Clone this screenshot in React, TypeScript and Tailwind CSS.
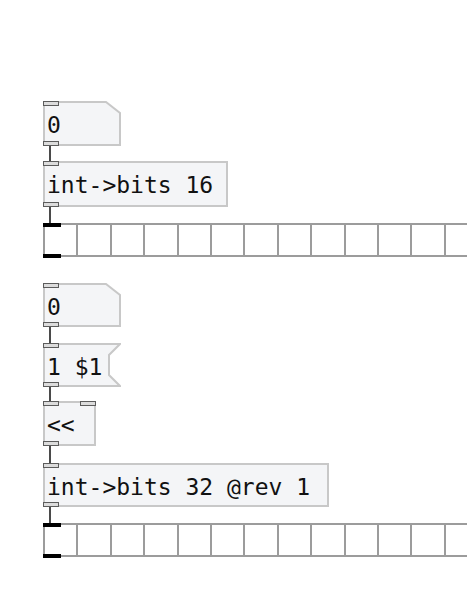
import React from 'react';

const mono = "font-['DejaVu_Sans_Mono','Liberation_Mono',monospace] text-[23px] leading-[23px] text-[#111] slashed-zero whitespace-pre";

type Shape = 'rect' | 'number' | 'message';

function outline(shape: Shape, w: number, h: number) {
  const r = w - 1;
  const b = h - 1;
  if (shape === 'number') return `1,1 ${w - 15},1 ${r},12 ${r},${b} 1,${b}`;
  if (shape === 'message') return `1,1 ${r},1 ${w - 12},12 ${w - 12},${h - 12} ${r},${b} 1,${b}`;
  return `1,1 ${r},1 ${r},${b} 1,${b}`;
}

const Port = ({ className }: { className: string }) => (
  <div className={`absolute h-[5px] w-4 border border-[#5c5c5c] bg-[#dcdcdc] ${className}`} />
);

interface BoxProps {
  className: string;
  w: number;
  h: number;
  shape?: Shape;
  text: string;
  rightInlet?: boolean;
}

// a pd box: outline drawn in svg, inlets on top, outlet bottom-left
const Box: React.FC<BoxProps> = ({ className, w, h, shape = 'rect', text, rightInlet }) => (
  <div className={`relative shrink-0 pl-[4px] pt-[13px] ${className}`}>
    <svg className="absolute inset-0" width={w} height={h}>
      <polygon points={outline(shape, w, h)} fill="#f4f5f7" stroke="#c8c8c8" strokeWidth="2" />
    </svg>
    <span className={`relative block ${mono}`}>{text}</span>
    <Port className="left-0 top-0" />
    {rightInlet && <Port className="right-0 top-0" />}
    <Port className="left-0 bottom-0" />
  </div>
);

const Wire = ({ className }: { className: string }) => (
  <div className={`ml-[6px] w-[2px] shrink-0 bg-[#4a4a4a] ${className}`} />
);

const Bits = () => (
  <div className="relative h-[34px] w-[424px] shrink-0">
    <div className="flex h-full overflow-hidden border-y-2 border-[#9c9c9c]">
      {Array.from({ length: 16 }, (_, i) => (
        <div key={i} className="h-full w-[33.4px] shrink-0 border-l-2 border-[#9c9c9c]" />
      ))}
    </div>
    <div className="absolute left-0 top-0 h-[4px] w-[18px] bg-black" />
    <div className="absolute left-0 top-[31px] h-[4px] w-[18px] bg-black" />
  </div>
);

export default function App() {
  return (
    <div className="flex h-[596px] w-[467px] flex-col overflow-hidden bg-white pl-[43px] pt-[101px]">
      {/* first chain */}
      <Box className="h-[45px] w-[78px]" w={78} h={45} shape="number" text="0" />
      <Wire className="h-[15px]" />
      <Box className="h-[46px] w-[185px]" w={185} h={46} text="int->bits 16" />
      <Wire className="h-[16px]" />
      <Bits />

      {/* second chain */}
      <div className="h-[26px] shrink-0" />
      <Box className="h-[44px] w-[78px]" w={78} h={44} shape="number" text="0" />
      <Wire className="h-[16px]" />
      <Box className="h-[44px] w-[78px]" w={78} h={44} shape="message" text="1 $1" />
      <Wire className="h-[14px]" />
      <Box className="h-[45px] w-[53px]" w={53} h={45} text="<<" rightInlet />
      <Wire className="h-[17px]" />
      <Box className="h-[44px] w-[286px]" w={286} h={44} text="int->bits 32 @rev 1" />
      <Wire className="h-[16px]" />
      <Bits />
    </div>
  );
}
